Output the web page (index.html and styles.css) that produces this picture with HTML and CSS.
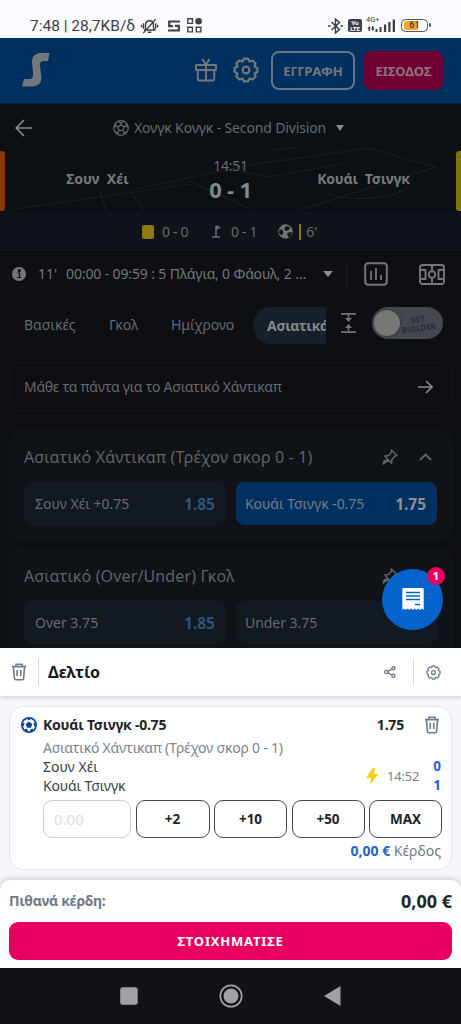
FILE: index.html
```html
<!DOCTYPE html>
<html lang="el">
<head>
<meta charset="utf-8">
<title>Δελτίο</title>
<link rel="stylesheet" href="styles.css">
</head>
<body>
<svg class="defs" width="0" height="0">
  <symbol id="trash" viewBox="0 0 16 18"><path d="M1 3.6h14M5 3.4V1.2h6v2.2M2.4 3.8l1 11.6q.1 1.4 1.4 1.4h6.4q1.3 0 1.4-1.4l1-11.6M6.2 7v6M9.8 7v6" fill="none" stroke="currentColor" stroke-width="1.6"/></symbol>
  <symbol id="pin" viewBox="0 0 16 16"><path d="M9.3 1l5.7 5.500-2 .4-3 3.300-.4 4L2.800 7.100l3.700-.5 3-3.300zM5.500 9.800L1.200 15l5.500-3.800M1.200 15l1.300-4" fill="none" stroke="currentColor" stroke-width="1.500" stroke-linejoin="round"/></symbol>
  <symbol id="gear" viewBox="0 0 26 26"><path d="M24.400 11V15L21.500 16.500L22.500 19.650L19.650 22.500L16.500 21.500L15 24.400H11L9.500 21.500L6.350 22.500L3.500 19.650L4.500 16.500L1.600 15V11L4.500 9.500L3.500 6.350L6.350 3.500L9.500 4.500L11 1.600H15L16.500 4.500L19.650 3.500L22.500 6.350L21.500 9.500Z" fill="none" stroke="currentColor" stroke-width="2.200" stroke-linejoin="round"/><circle cx="13" cy="13" r="3.400" fill="none" stroke="currentColor" stroke-width="2.200"/></symbol>
</svg>
<main class="phone">
  <header class="status">
    <span class="status-time">7:48 | 28,7KB/δ</span>
    <svg class="i-bell" width="19" height="16" viewBox="0 0 20 18" fill="none" stroke="currentColor" stroke-width="1.600"><path d="M5.500 13V8Q5.500 3 10 3t4.500 5v3l1.500 2.500H4M8 16h4M3 17L17 1.500M3.200 6v6M1 7.500v3M17 6v6M19.200 7.500v3"/></svg>
    <svg class="i-s" width="12" height="12" viewBox="0 0 12 12" fill="none" stroke="currentColor" stroke-width="2.200"><path d="M12 1.500H1.200V6.200H5M0 10.500h10.800V5.800H7"/></svg>
    <svg class="i-grid" width="15" height="15" viewBox="0 0 15 15" fill="none" stroke="currentColor" stroke-width="1.400"><path d="M.8.800h4.600v4.600H.8zM.8 9.300h4.600v4.600H.8zM9.300 9.300h4.600v4.600H9.300z"/><circle cx="11.600" cy="3.300" r="3.300" fill="currentColor" stroke="none"/></svg>
    <span class="grow"></span>
    <svg width="15" height="16" viewBox="0 0 15 16" fill="none" stroke="currentColor" stroke-width="1.500"><path d="M3.500 4l8 7.500L7.500 15V1l4 3.500-8 7.500M0 8h2.600M12.400 8H15"/></svg>
    <span class="volte"><b>Vo</b><b>LTE</b></span>
    <span class="signal"><small>4G+</small>
      <svg width="28" height="14" viewBox="0 0 28 14" fill="currentColor"><path d="M.5 9.500l1.800-2.500L4 9.500H3V12H1.500V9.500zM5 7h1.500v2.500h1L5.800 12 4 9.500h1zM8.500 10h2v3h-2zM12.500 8h2v5h-2zM17 5.500h2.200V13H17zM21.300 3h2.200v10h-2.200zM25.700.500H28V13h-2.300z"/></svg></span>
    <span class="battery"><i>61</i></span>
  </header>

  <section class="app">
    <div class="topbar">
      <svg class="logo" width="28" height="34" viewBox="0 0 28 34" fill="currentColor"><path d="M27.500 0H17.500Q10.500 1 9.800 8L11 20Q11.500 26 7.500 26H2L0 33.500H10.500Q19 33 19.500 25L18 13Q17.500 8 22 8H26Z"/></svg>
      <span class="grow"></span>
      <svg class="gift" width="22" height="24" viewBox="0 0 22 24" fill="none" stroke="currentColor" stroke-width="1.900" stroke-linejoin="round"><path d="M1 7h20v5H1zM2.700 12v8.500q0 2 2 2h12.600q2 0 2-2V12M11 7v15.500M11 7L7.500 1M11 7l3.500-6"/></svg>
      <svg class="cog" width="26" height="26"><use href="#gear"/></svg>
      <button class="btn btn-line"><span>ΕΓΓΡΑΦΗ</span></button>
      <button class="btn btn-fill"><span>ΕΙΣΟΔΟΣ</span></button>
    </div>

    <div class="hero">
      <svg class="pitch" width="461" height="107" viewBox="0 0 461 107" fill="none" stroke="#171f21" stroke-width="1.200"><path d="M135 85L250 61 368 44 436 63 297 107M0 107L190 80M190 77l60 28M100 88l6 19M130 86l14 21M230 65l38 8 74-13M268 46l33-3M408 69q8 17-22 23t-60-2"/></svg>
      <div class="league">
        <svg class="back" width="18" height="18" viewBox="0 0 18 18" fill="none" stroke="currentColor" stroke-width="1.600"><path d="M17 9H1.500M9 1L1.200 9 9 17"/></svg>
        <svg class="ball" width="16" height="16" viewBox="0 0 16 16" fill="none" stroke="currentColor" stroke-width="1.200"><circle cx="8" cy="8" r="7.300"/><path d="M8 4.800l3 2.200-1.200 3.500H6.200L5 7zM8 4.800V3L5 1.300M8 3l3-1.700M11 7l2-.8 1.800 1M13 6.200l.4-2.500M9.800 10.500l1.400 2-.5 2M11.200 12.500l2.500-.4M6.200 10.500l-1.400 2 .5 2M4.800 12.500l-2.500-.4M5 7l-2-.8-1.800 1M3 6.200l-.4-2.500"/></svg>
        <span class="t-league">Χονγκ Κονγκ - Second Division</span><i class="caret"></i>
      </div>
      <div class="score">
        <i class="kit kit-home"></i>
        <b class="team">Σουν&nbsp; Χέι</b>
        <div class="mid"><span class="clock">14:51</span><b class="result">0 - 1</b></div>
        <b class="team team-away">Κουάι&nbsp; Τσινγκ</b>
        <i class="kit kit-away"></i>
      </div>
    </div>

    <div class="stats">
      <i class="yellow"></i><span class="stat">0 - 0</span>
      <svg class="corner" width="10" height="13" viewBox="0 0 10 13" fill="none" stroke="currentColor" stroke-width="1.600"><path d="M5 12V1M1 12h8"/><path d="M5 0l5 2.500L5 5z" fill="currentColor" stroke="none"/></svg>
      <span class="stat">0 - 1</span>
      <svg class="goal" width="15" height="15" viewBox="0 0 15 15"><circle cx="7.500" cy="7.500" r="7.200" fill="#747576"/><path d="M8 2l4 1-1 3-3 1-2-2zM1.500 5l3 1 1 3-2 2.500L1 9zM9 9.500l3-1.500 2 .5-1 4-2.500 1zM4 1.500L2.500 3l-.5-.5z" fill="#15181b"/></svg>
      <i class="tick"></i><span>6'</span>
    </div>

    <div class="events">
      <svg class="info" width="14" height="14" viewBox="0 0 14 14"><circle cx="7" cy="7" r="7" fill="currentColor"/><path d="M5.500 6h2v4.500M5.200 10.500h3.800M6.500 2.800h1.600v1.600H6.500z" fill="none" stroke="#0d0f13" stroke-width="1.200"/></svg>
      <span class="minute">11'</span><span class="t-event">00:00 - 09:59 : 5 Πλάγια, 0 Φάουλ, 2 …</span><i class="caret"></i>
      <span class="rule"></span>
      <svg class="chart" width="24" height="24" viewBox="0 0 24 24" fill="none" stroke="currentColor" stroke-width="2"><rect x="1.200" y="1.200" width="21.600" height="21.600" rx="3"/><path d="M7 9v9M12 6v12M17 13v5" stroke-width="1.800"/></svg>
      <svg width="26" height="21" viewBox="0 0 26 21" fill="none" stroke="currentColor" stroke-width="1.900"><rect x="1" y="1" width="24" height="19" rx="2.500"/><path d="M13 1v6M13 14v6M1 6h5.500v9H1M25 6h-5.500v9H25"/><circle cx="13" cy="10.500" r="3.300"/></svg>
    </div>

    <nav class="tabs">
      <span class="tab-a">Βασικές</span><span class="tab-b">Γκολ</span><span class="tab-c">Ημίχρονο</span>
      <b class="tab-on">Ασιατικά</b>
      <svg class="collapse" width="15" height="20" viewBox="0 0 15 20" fill="currentColor"><path d="M0 0h15v1.700H0zM0 18.300h15V20H0zM6.700 1.500h1.600V5H11L7.500 9 4 5h2.700zM6.700 18.500h1.600V15H11l-3.500-4L4 15h2.700z"/></svg>
      <span class="toggle"><i class="knob"></i><b>BET<br>BUILDER</b></span>
    </nav>

    <div class="learn"><span class="t-learn">Μάθε τα πάντα για το Ασιατικό Χάντικαπ</span>
      <svg width="15" height="14" viewBox="0 0 15 14" fill="none" stroke="currentColor" stroke-width="1.700"><path d="M0 7h13.500M8 1l6 6-6 6"/></svg></div>

    <section class="market">
      <h2><span>Ασιατικό Χάντικαπ (Τρέχον σκορ 0 - 1)</span><svg class="pin" width="16" height="16"><use href="#pin"/></svg><svg class="chev" width="13" height="8" viewBox="0 0 13 8" fill="none" stroke="currentColor" stroke-width="1.900"><path d="M1 7l5.500-5.500L12 7"/></svg></h2>
      <div class="odds"><button class="odd"><span>Σουν Χέι +0.75</span><b>1.85</b></button><button class="odd odd-on"><span>Κουάι Τσινγκ -0.75</span><b>1.75</b></button></div>
    </section>
    <section class="market">
      <h2><span>Ασιατικό (Over/Under) Γκολ</span><svg class="pin" width="16" height="16"><use href="#pin"/></svg><svg class="chev" width="13" height="8"></svg></h2>
      <div class="odds"><button class="odd"><span>Over 3.75</span><b>1.85</b></button><button class="odd"><span>Under 3.75</span></button></div>
    </section>
    <div class="fab">
      <svg width="22" height="23" viewBox="0 0 22 23"><path d="M1.500 0h19q1.200 0 1.200 1.200V22l-1.800-1.500-1.800 1.500-1.800-1.500-1.800 1.500-1.800-1.500-1.800 1.500-1.800-1.500-1.800 1.500-1.800-1.500L3.700 22l-1.800-1.500L.3 22V1.200Q.3 0 1.500 0z" fill="#fff"/><path d="M4 4.500h14M4 8h14M4 11.500h14M13 16.500h5" stroke="#0564cc" stroke-width="1.400"/></svg>
      <b class="badge">1</b>
    </div>
  </section>

  <section class="slip">
    <header class="slip-head">
      <svg width="16" height="18"><use href="#trash"/></svg><i class="bar"></i><b class="t-slip">Δελτίο</b><span class="grow"></span>
      <svg width="12" height="12" viewBox="0 0 12 12" fill="none" stroke="currentColor" stroke-width="1.400"><circle cx="2.300" cy="6" r="1.600"/><circle cx="9.400" cy="2.300" r="1.600"/><circle cx="9.400" cy="9.700" r="1.600"/><path d="M3.800 5.300L8 3M3.800 6.700L8 9"/></svg>
      <i class="bar bar-r"></i><svg width="15" height="15"><use href="#gear"/></svg>
    </header>
    <div class="slip-body">
      <article class="bet">
        <div class="pick">
          <svg class="ball-blue" width="16" height="16" viewBox="0 0 16 16"><circle cx="8" cy="8" r="8" fill="#064795"/><circle cx="8" cy="8" r="6.300" fill="#fff"/><path d="M8 4.600l3.300 2.400L10 10.800H6L4.700 7zM5.500 1.500h5L8 3.400zM1.300 5.500l2.300.8L2.800 9 1.400 10zM14.700 5.500l-2.300.8.800 2.700 1.400 1zM3.500 13l1.200-1.400 2.300 1.100-.5 2zM12.500 13l-1.200-1.400L9 12.700l.5 2z" fill="#064795"/></svg>
          <b class="t-pick">Κουάι Τσινγκ -0.75</b><span class="grow"></span><b class="price">1.75</b><svg class="bin2" width="16" height="18"><use href="#trash"/></svg>
        </div>
        <div class="detail">
          <div class="names"><span class="muted">Ασιατικό Χάντικαπ (Τρέχον σκορ 0 - 1)</span><span>Σουν Χέι</span><span class="t-n2">Κουάι Τσινγκ</span></div>
          <div class="live"><svg width="13" height="17" viewBox="0 0 13 17"><path d="M7 0L0 9.800h5L4 16.500 12.500 6H7.800L9 0z" fill="#f5cf0a"/></svg><span class="t-live">14:52</span><div class="nums"><b>0</b><b>1</b></div></div>
        </div>
        <div class="stakes"><span class="stake stake-in">0.00</span><b class="stake">+2</b><b class="stake">+10</b><b class="stake">+50</b><b class="stake">MAX</b></div>
        <div class="profit"><b>0,00 €</b> <span>Κέρδος</span></div>
      </article>
    </div>
    <footer class="total">
      <div class="sum"><b class="t-poss">Πιθανά κέρδη:</b><b class="amount">0,00 €</b></div>
      <button class="place"><span>ΣΤΟΙΧΗΜΑΤΙΣΕ</span></button>
    </footer>
  </section>

  <nav class="sysnav">
    <svg width="18" height="18"><rect width="17.500" height="17.500" x=".2" y=".2" rx="2.500" fill="#a1a1a4"/></svg>
    <svg width="24" height="24"><circle cx="12" cy="12" r="10.700" fill="none" stroke="#a1a1a4" stroke-width="1.700"/><circle cx="12" cy="12" r="7.500" fill="#a1a1a4"/></svg>
    <svg width="17" height="20"><path d="M0 10L16.500 0v20z" fill="#a1a1a4"/></svg>
  </nav>
</main>
</body>
</html>
```
FILE: styles.css
```css
* { box-sizing: border-box; }
body { margin: 0; font: 14px/20px "Noto Sans", "Open Sans", sans-serif; background: #0d0f13; }
button { margin: 0; padding: 0; border: 0; font: inherit; color: inherit; background: none; }
i { font-style: normal; }
svg { flex: none; display: block; }
span, b { white-space: nowrap; }
.defs { position: absolute; }
.grow { flex: 1; }
.phone { width: 461px; height: 1024px; overflow: hidden; display: flex; flex-direction: column; }

.status { height: 38px; background: #fafaff; color: #3f4044; display: flex; align-items: center; padding: 13px 33px 0 30px; font-family: Roboto, sans-serif; flex: none; }
.status-time { font-size: 15.500px; width: 110px; }
.i-s { margin-left: 9px; }
.i-grid { margin-left: 7px; }
.volte { margin-left: 5px; width: 14px; height: 13px; border-radius: 2px; background: #3f4044; color: #fff; font-size: 6px; line-height: 6px; display: flex; flex-direction: column; align-items: center; justify-content: center; }
.signal { width: 28px; margin-left: 5px; position: relative; }
.signal small { position: absolute; left: -1px; top: -5px; font-size: 7.500px; line-height: 12px; }
.battery { margin-left: 6px; width: 27px; height: 13px; border: 1.500px solid #555; border-radius: 4.500px; padding: 1px 2px; position: relative; }
.battery::after { content: ""; position: absolute; right: -4px; top: 3px; width: 2px; height: 4px; background: #555; border-radius: 1px; }
.battery i { display: block; height: 9px; font-size: 9px; line-height: 9px; font-weight: 600; text-align: center; background: linear-gradient(90deg, #f9a825 65%, transparent 65%); border-radius: 2px; }

.app { height: 610px; flex: none; background: #0d0f13; color: #67696c; position: relative; overflow: hidden; }
.topbar { height: 66px; background: #00305f; display: flex; align-items: center; padding: 0 18px 0 22px; color: #747779; border-bottom: 1px solid #061f3b; }
.logo { margin-top: -2px; }
.gift { margin: -2px 16px 0 0; }
.cog { margin: -2px 12px 0 0; }
.btn { height: 39px; border-radius: 8px; font-size: 13px; font-weight: 700; display: flex; align-items: center; justify-content: center; }
.btn-line { width: 84px; border: 2px solid #68747f; margin-right: 9px; }
.btn-fill { width: 79px; background: #700033; color: #88737e; }

.hero { height: 108px; background: #0b1014; position: relative; display: flex; flex-direction: column; }
.pitch { position: absolute; left: 0; top: 0; }
.league { position: relative; height: 48px; display: flex; align-items: center; padding-left: 15px; }
.back { margin-right: 80px; color: #898b8d; }
.ball { margin-right: 5px; }
.t-league { letter-spacing: -.14px; }
.caret { border: 5px solid transparent; border-top: 6px solid #8a8c8e; border-bottom: 0; }
.league .caret { margin-left: 10px; border-width: 6px 4.500px 0; }
.score { position: relative; flex: 1; display: grid; grid-template-columns: 5px 185px 81px 185px 5px; }
.kit { height: 60px; margin-top: -1px; }
.kit-home { background: #873900; border-radius: 0 3px 3px 0; }
.kit-away { background: #80740b; border-radius: 3px 0 0 3px; }
.team { text-align: center; padding-top: 17px; color: #78797a; }
.team-away { letter-spacing: -.2px; }
.mid { display: flex; flex-direction: column; align-items: center; padding-top: 3px; }
.clock { line-height: 21px; letter-spacing: -.3px; }
.result { font-size: 22px; line-height: 26px; color: #858687; letter-spacing: -.2px; }

.stats { height: 39px; background: #101319; display: flex; align-items: center; padding-left: 142px; }
.stat { letter-spacing: -.35px; }
.yellow { width: 12px; height: 14px; border-radius: 2px; background: #8f7915; margin-right: 8px; }
.corner { margin: 0 10px 0 23px; }
.goal { margin: 0 6px 0 21px; }
.tick { width: 2px; height: 16px; background: #8c7a10; margin-right: 5px; }

.events { height: 46px; display: flex; align-items: center; padding: 0 15px 0 12px; color: #747679; }
.minute { margin: 0 9px 0 12px; width: 19px; }
.t-event { width: 243px; letter-spacing: -.13px; }
.events .caret { margin-left: 14px; }
.rule { width: 1px; height: 28px; background: #1b1d21; margin: 0 17px 0 13px; }
.chart { margin-right: 31px; }

.tabs { height: 56px; margin-bottom: 9px; display: flex; align-items: center; padding-left: 24px; }
.tab-a { width: 85px; }
.tab-b { width: 62px; }
.tab-c { width: 82px; letter-spacing: -.1px; }
.tab-on { width: 73px; height: 37px; line-height: 37px; padding-left: 14px; overflow: hidden; background: #15202b; border-radius: 18px 0 0 18px; color: #85878a; letter-spacing: -.3px; }
.collapse { margin: -4px 16px 0 15px; color: #727477; }
.toggle { width: 71px; height: 32px; margin-top: -4px; border-radius: 16px; background: #45474f; display: flex; align-items: center; padding-left: 2px; }
.knob { width: 26px; height: 26px; border-radius: 50%; background: #777673; box-shadow: 1px 0 2px #333; }
.toggle b { font-size: 8px; line-height: 8.500px; text-align: center; transform: rotate(-7deg); color: #292c39; margin-left: 1px; }

.learn { height: 49px; margin: 0 9px 19px; border: 1px solid #15171b; border-radius: 10px; display: flex; align-items: center; justify-content: space-between; padding: 0 18px 0 14px; }
.learn svg { color: #86888b; }
.t-learn { letter-spacing: -.26px; }
.market { height: 110px; margin: 0 9px 9px; background: #0f1217; border: 1px solid #14171c; border-radius: 12px; padding: 0 14px; }
.market h2 { margin: 0; height: 51px; display: flex; align-items: center; font-size: 16px; font-weight: 400; color: #606264; letter-spacing: .14px; }
.pin { margin-left: auto; }
.chev { margin: 0 5px 0 21px; }
.odds { display: grid; grid-template-columns: 202px 201px; gap: 10px; }
.odd { height: 43px; border-radius: 8px; background: #131920; border: 1px solid #161b22; display: flex; align-items: center; justify-content: space-between; padding: 0 10px; }
.odd + .odd { padding-left: 8px; letter-spacing: -.05px; }
.odd b { font-size: 15.500px; color: #2d527c; }
.odd-on { background: #00305f; border-color: #00305f; color: #717d89; }
.odd-on b { color: #8a9198; }
.fab { position: absolute; left: 382px; top: 531px; width: 61px; height: 61px; border-radius: 50%; background: #0564cc; display: flex; align-items: center; justify-content: center; }
.badge { position: absolute; left: 45px; top: -2px; width: 18px; height: 18px; border-radius: 50%; background: #e9005f; color: #fff; font-size: 11px; line-height: 18px; text-align: center; }

.slip { height: 320px; flex: none; background: #f5f7fa; color: #222428; display: flex; flex-direction: column; overflow: hidden; }
.slip-head { height: 48px; flex: none; background: #fff; box-shadow: 0 1px 5px #0003; display: flex; align-items: center; padding: 0 20px 0 11px; color: #6d7c8e; position: relative; }
.bar { width: 1px; height: 28px; background: #d9dce0; margin: 0 9px 0 11px; }
.bar-r { margin: 0 12px 0 17px; }
.t-slip { font-size: 16px; color: #16181b; letter-spacing: -.1px; }
.slip-body { height: 184px; padding: 10px 9px; flex: none; }
.bet { height: 164px; background: #fff; border: 1px solid #e4e8ec; border-radius: 14px; padding: 0 10px 0 33px; display: flex; flex-direction: column; }
.pick { height: 36px; display: flex; align-items: center; margin-left: -22px; }
.ball-blue { margin-right: 6px; }
.t-pick { letter-spacing: -.24px; }
.price { margin-right: 20px; letter-spacing: -.2px; }
.bin2 { color: #6d7c8e; margin-right: 1px; }
.detail { display: flex; justify-content: space-between; height: 61px; margin-top: -4px; }
.names { display: flex; flex-direction: column; line-height: 19px; color: #3e4147; }
.names .muted { color: #7b8592; line-height: 17px; margin-bottom: 1px; letter-spacing: -.22px; }
.t-n2 { letter-spacing: -.16px; }
.live { display: flex; align-items: center; height: 38px; margin-top: 18px; color: #7b8592; font-size: 13px; }
.t-live { margin: 0 14px 0 8px; letter-spacing: -.2px; }
.nums { display: flex; flex-direction: column; line-height: 19px; color: #2463cc; font-size: 13.500px; }
.stakes { display: grid; grid-template-columns: 88px 74px 73px 73px 73px; gap: 4.500px; height: 38px; }
.stake { border: 1px solid #44474b; border-radius: 9px; line-height: 36px; text-align: center; font-size: 13.500px; }
.stake-in { border-color: #cbced2; color: #dcdee5; text-align: left; padding-left: 10px; font-size: 15px; }
.profit { text-align: right; margin-top: 3px; color: #6e7987; }
.profit b { color: #2463cc; }
.total { height: 88px; background: #fff; border-radius: 10px 10px 0 0; box-shadow: 0 -1px 6px #0003; padding: 0 9px; flex: none; position: relative; }
.sum { height: 42px; display: flex; align-items: center; justify-content: space-between; }
.t-poss { color: #6e7987; letter-spacing: -.28px; }
.amount { font-size: 18px; }
.place { width: 443px; height: 38px; border-radius: 9px; background: #e70060; color: #fff; font-size: 13px; font-weight: 700; letter-spacing: .8px; }
.sysnav { height: 56px; background: #111318; display: flex; align-items: center; justify-content: center; gap: 81px; padding-right: 1px; }
```
